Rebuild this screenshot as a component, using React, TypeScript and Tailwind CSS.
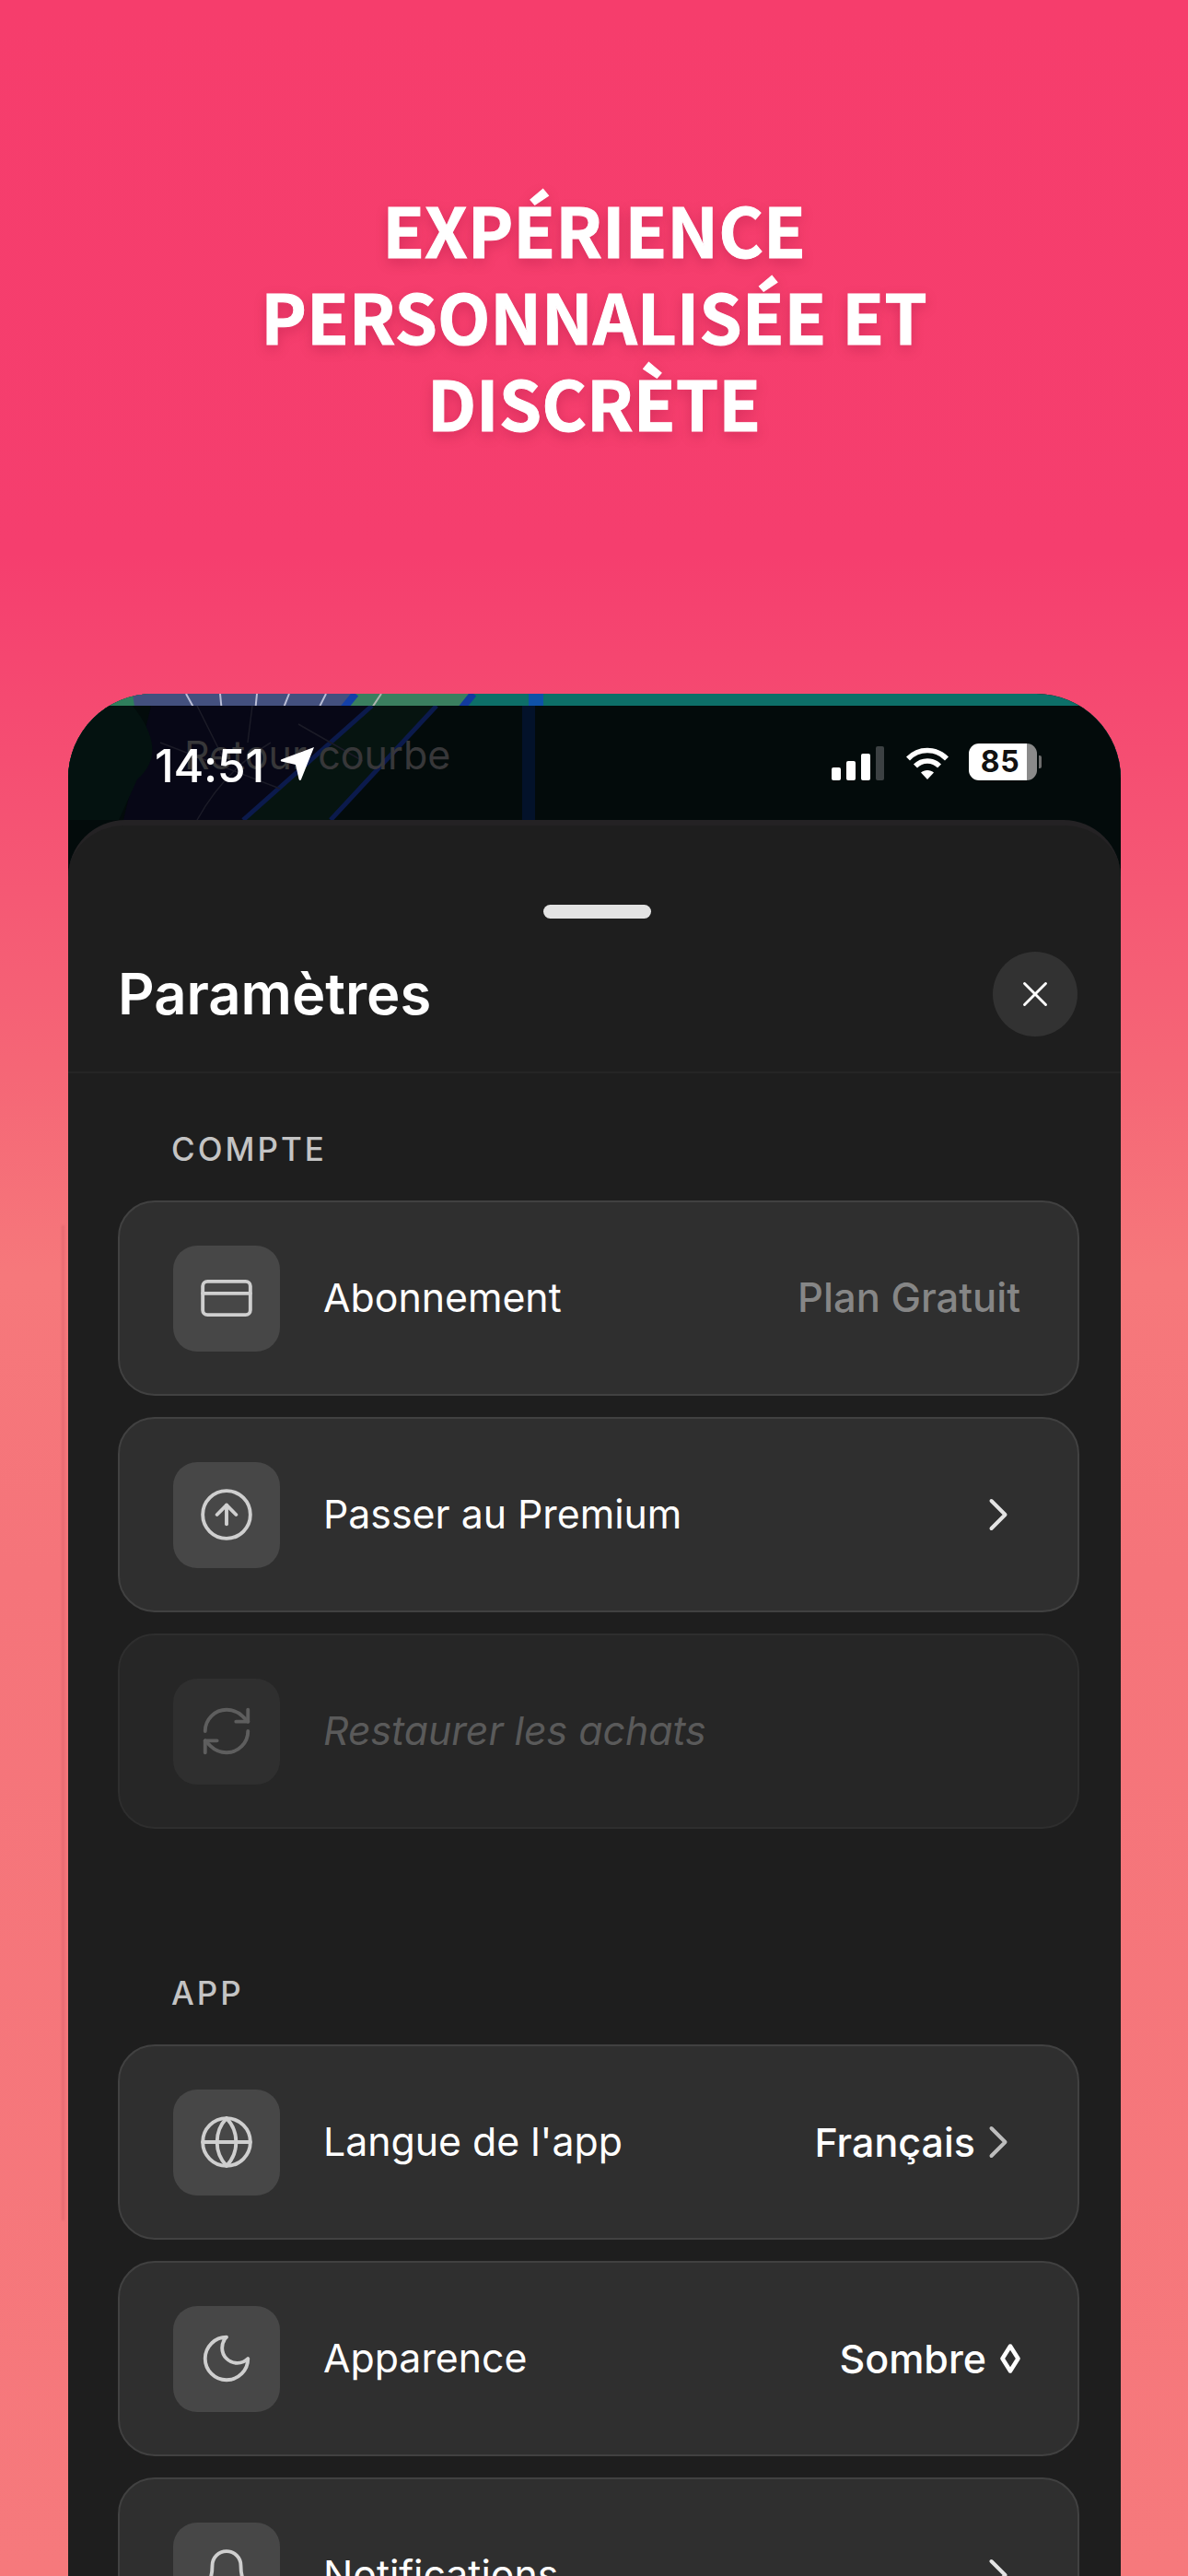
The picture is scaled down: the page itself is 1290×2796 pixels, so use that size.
import { ChevronRight, CircleArrowUp, CreditCard, Globe, RefreshCw, X } from "lucide-react";
import type { ReactNode } from "react";

function Lozenge() {
  return (
    <svg width="22" height="32" viewBox="0 0 22 32" fill="none" stroke="#ffffff" strokeWidth="4.500" strokeLinejoin="round">
      <path d="M11 2.500 19.500 16 11 29.500 2.500 16Z" />
    </svg>
  );
}

function Chevron({ muted }: { muted?: boolean }) {
  return <ChevronRight size={60} strokeWidth={1.6} className={`-mr-[6px] ${muted ? "-ml-[5px] text-[#bdbdbd]" : "text-[#e4e4e4]"}`} />;
}

function MoonIcon() {
  return (
    <svg width="62" height="62" viewBox="0 0 24 24" fill="none" stroke="currentColor" strokeWidth="1.5" strokeLinecap="round" strokeLinejoin="round">
      <path d="M12 3a6 6 0 0 0 9 9 9 9 0 1 1-9-9Z" />
    </svg>
  );
}

function BellIcon() {
  return (
    <svg width="62" height="62" viewBox="0 0 24 24" fill="none" stroke="currentColor" strokeWidth="1.5" strokeLinecap="round" strokeLinejoin="round">
      <path d="M6 8a6 6 0 0 1 12 0c0 7 3 9 3 9H3s3-2 3-9" />
      <path d="M10.300 21a1.940 1.940 0 0 0 3.400 0" />
    </svg>
  );
}

function Row({ icon, label, right, disabled }: { icon: ReactNode; label: string; right?: ReactNode; disabled?: boolean }) {
  return (
    <div
      className={`flex h-[212px] items-center rounded-[40px] border-2 pl-[58px] pr-[62px] ${
        disabled ? "border-[#2e2e2e] bg-[#262626]" : "border-[#414141] bg-[#2f2f2f]"
      }`}
    >
      <div
        className={`flex h-[115px] w-[116px] shrink-0 items-center justify-center rounded-[26px] ${
          disabled ? "bg-[#2f2f2f] text-[#5e5e5e]" : "bg-[#474747] text-[#cfcfcf]"
        }`}
      >
        {icon}
      </div>
      <div className={`ml-[47px] flex-1 text-[42.800px] ${disabled ? "italic text-[#5a5a5a]" : "text-white"}`}>{label}</div>
      {right}
    </div>
  );
}

function Section({ title, children }: { title: string; children: ReactNode }) {
  return (
    <section>
      <div className="pl-[58px] text-[35px] font-medium leading-[40px] tracking-[3px] text-[#c4c4c4]">{title}</div>
      <div className="mt-[36px] flex flex-col gap-[23px]">{children}</div>
    </section>
  );
}

function MapBackdrop() {
  return (
    <svg className="absolute inset-0 h-full w-full" viewBox="0 0 1143 137" preserveAspectRatio="none" fill="none">
      <rect width="1143" height="137" fill="#0d6f68" />
      <path d="M0 0H110L165 70 110 137H0Z" fill="#2f7f5c" />
      <path d="M70 0H340L240 137H90Z" fill="#43507e" />
      <path d="M312 0H440L330 137H200Z" fill="#3a7f5f" />
      <path d="M312 0 200 137" stroke="#1440a8" strokeWidth="8" />
      <path d="M440 0 330 137" stroke="#123a9e" strokeWidth="8" />
      <rect x="500" width="16" height="137" fill="#0f52a8" />
      <path d="M128 0 150 40M165 0 170 50M205 0 200 50M240 0 220 50M280 0 250 60" stroke="#b9bdd6" strokeWidth="2" />
      <path d="M340 0 320 30" stroke="#aeb6b0" strokeWidth="2" />
    </svg>
  );
}

function StatusBar() {
  return (
    <div className="relative h-[137px] shrink-0">
      <MapBackdrop />
      <div className="absolute inset-x-0 bottom-0 top-[13px] bg-[#030b0b]" />
      <svg className="absolute inset-x-0 top-[13px] h-[124px] w-full" viewBox="0 0 1143 124" fill="none">
        <path d="M90 0H330L190 124H60Z" fill="#070716" />
        <path d="M0 0H70Q110 50 75 80L55 124H0Z" fill="#041210" />
        <path d="M330 0H400L285 124H190Z" fill="#061410" />
        <path d="M190 124 330 0M285 124 400 0" stroke="#0b1a4c" strokeWidth="5" />
        <path d="M100 40 230 90M140 124Q170 70 220 40M250 20 320 60M140 0 170 60M200 0 195 40" stroke="#1b1b27" strokeWidth="1.500" />
        <path d="M500 0V124" stroke="#03122a" strokeWidth="14" />
      </svg>
      <div className="absolute left-[126px] top-[40px] text-[43px] leading-[52px] text-[#373739]">Retour courbe</div>
      <div className="relative flex h-full items-start pl-[94px] pr-[86px] pt-[50px] text-white">
        <span className="text-[50px] font-medium leading-[56px] tracking-[-0.3px]">14:51</span>
        <svg className="ml-[17px] mt-[7px]" width="38" height="38" viewBox="0 0 38 38" fill="#ffffff">
          <path d="M37 1 23 36c-.5 1.300-2 1.200-2.400-.1L17 20 1.800 16.600C.5 16.300.4 14.700 1.600 14.200Z" />
        </svg>
        <div className="ml-auto mt-[7px] flex items-end gap-[6px]">
          <span className="h-[14px] w-[10px] rounded-[2px] bg-white" />
          <span className="h-[21px] w-[10px] rounded-[2px] bg-white" />
          <span className="h-[29px] w-[10px] rounded-[2px] bg-white" />
          <span className="h-[37px] w-[9px] rounded-[2px] bg-[#3c4143]" />
        </div>
        <svg className="ml-[23px] mt-[7px]" width="48" height="37" viewBox="0 0 48 37" fill="none" stroke="#ffffff" strokeWidth="5.500">
          <path d="M3 13.500C14.500 1.500 33.500 1.500 45 13.500" />
          <path d="M11 21.500C18 14 30 14 37 21.500" />
          <path d="M24 36 17 28.500C20.500 25 27.500 25 31 28.500Z" fill="#ffffff" stroke="none" />
        </svg>
        <div className="ml-[21px] mt-[4px] flex h-[40px] w-[74px] items-center justify-center rounded-[11px] bg-[linear-gradient(90deg,#ffffff_0,#ffffff_85%,#8a8a8a_85%,#8a8a8a_100%)] pr-[6px] text-[32px] font-bold leading-none tracking-[0.5px] text-[#111111]">
          85
        </div>
        <span className="ml-[2px] mt-[17px] h-[14px] w-[3px] rounded-r-[2px] bg-[#6d6d6d]" />
      </div>
    </div>
  );
}

export default function App() {
  const iconProps = { size: 62, strokeWidth: 1.5 };
  return (
    <div
      className="relative h-[2796px] w-[1290px] overflow-hidden bg-[linear-gradient(180deg,#f63d6c_0,#f53e6e_21.500%,#f55273_31.500%,#f56676_41.500%,#f6787b_49.500%,#f5747a_61%,#f6797c_100%)] pt-[201px]"
      style={{ fontFamily: "Inter, sans-serif" }}
    >
      <div className="absolute left-[67px] top-[1330px] h-[1080px] w-[3px] bg-[#d9606a]/50 blur-[1px]" />
      <h1
        className="text-center text-[74.500px] font-bold leading-[94px] text-white [-webkit-text-stroke:1px_#ffffff] [text-shadow:0_5px_14px_rgba(120,0,40,0.25)]"
        style={{ fontFamily: '"Noto Sans CJK JP", "Noto Sans", sans-serif' }}
      >
        EXPÉRIENCE
        <br />
        PERSONNALISÉE ET
        <br />
        DISCRÈTE
      </h1>

      <div className="relative ml-[74px] mt-[270px] flex h-[2100px] w-[1143px] flex-col overflow-hidden rounded-t-[92px] bg-[#030b0b]">
        <StatusBar />
        <div className="flex-1 rounded-t-[62px] border-t-[6px] border-[#242224] bg-[#1e1e1e]">
          <div className="mx-auto mt-[86px] h-[15px] w-[117px] translate-x-[3px] rounded-full bg-[#e3e3e3]" />
          <header className="mt-[36px] flex h-[132px] items-start border-b-2 border-[#252525] pl-[54px] pr-[47px]">
            <h2 className="flex-1 text-[61.500px] font-semibold leading-[92px] text-white">Paramètres</h2>
            <button className="flex h-[92px] w-[92px] items-center justify-center rounded-full bg-[#323232] text-white">
              <X size={46} strokeWidth={1.5} />
            </button>
          </header>
          <div className="flex flex-col gap-[158px] pl-[54px] pr-[45px] pt-[62px]">
            <Section title="COMPTE">
              <Row
                icon={<CreditCard {...iconProps} />}
                label="Abonnement"
                right={<span className="text-[43.500px] font-medium text-[#868686]">Plan Gratuit</span>}
              />
              <Row icon={<CircleArrowUp {...iconProps} />} label="Passer au Premium" right={<Chevron />} />
              <Row icon={<RefreshCw {...iconProps} />} label="Restaurer les achats" disabled />
            </Section>
            <Section title="APP">
              <Row
                icon={<Globe {...iconProps} />}
                label="Langue de l'app"
                right={
                  <span className="flex items-center text-[43px] font-medium text-white">
                    Français
                    <Chevron muted />
                  </span>
                }
              />
              <Row
                icon={<MoonIcon />}
                label="Apparence"
                right={
                  <span className="flex items-center gap-[15px] text-[43px] font-medium text-white">
                    Sombre
                    <Lozenge />
                  </span>
                }
              />
              <Row icon={<BellIcon />} label="Notifications" right={<Chevron />} />
            </Section>
          </div>
        </div>
      </div>
    </div>
  );
}
